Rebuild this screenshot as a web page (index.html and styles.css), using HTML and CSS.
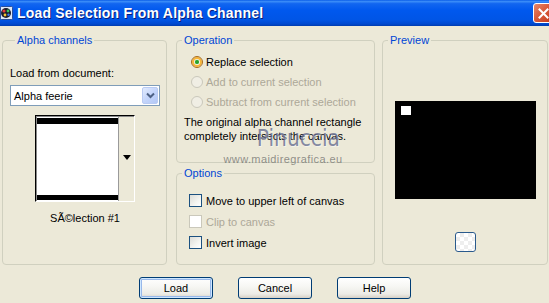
FILE: index.html
```html
<!DOCTYPE html>
<html>
<head>
<meta charset="utf-8">
<link rel="stylesheet" href="styles.css">
</head>
<body>
<div class="window">
  <div class="titlebar">
    <svg class="app-icon" width="13" height="14" viewBox="0 0 13 14">
      <rect x="0.5" y="0.5" width="12" height="13" rx="1" fill="#dfe8f7" stroke="#2b4f9a"/>
      <circle cx="6" cy="7" r="5" fill="#1b1b2a"/>
      <circle cx="4" cy="5" r="1.6" fill="#e23b3b"/>
      <circle cx="8" cy="5" r="1.4" fill="#3cc25a"/>
      <circle cx="5" cy="9" r="1.4" fill="#f2c230"/>
      <circle cx="8.5" cy="8.8" r="1.2" fill="#3a7be8"/>
    </svg>
    <span class="title">Load Selection From Alpha Channel</span>
    <span class="close">
      <svg width="11" height="11" viewBox="0 0 11 11"><path d="M1.5 1.5 L9.5 9.5 M9.5 1.5 L1.5 9.5" stroke="#fff" stroke-width="2" stroke-linecap="square"/></svg>
    </span>
  </div>
  <div class="content">
    <div class="groups">
      <fieldset class="group alpha">
        <legend>Alpha channels</legend>
        <div class="field-label">Load from document:</div>
        <div class="select">
          <span class="select-value">Alpha feerie</span>
          <span class="select-btn">
            <svg width="9" height="7" viewBox="0 0 9 7"><path d="M1 1.5 L4.5 5 L8 1.5" fill="none" stroke="#4d6185" stroke-width="2"/></svg>
          </span>
        </div>
        <div class="thumbbox">
          <div class="thumb"></div>
          <div class="thumb-side"><span class="tri"></span></div>
        </div>
        <div class="caption">SÃ©lection #1</div>
      </fieldset>
      <div class="middle">
        <fieldset class="group operation">
          <legend>Operation</legend>
          <div class="rows">
            <div class="row"><span class="radio checked"></span><span>Replace selection</span></div>
            <div class="row disabled"><span class="radio"></span><span>Add to current selection</span></div>
            <div class="row disabled"><span class="radio"></span><span>Subtract from current selection</span></div>
          </div>
          <p class="desc">The original alpha channel rectangle completely intersects the canvas.</p>
        </fieldset>
        <fieldset class="group options">
          <legend>Options</legend>
          <div class="rows">
            <div class="row crow"><span class="check"></span><span>Move to upper left of canvas</span></div>
            <div class="row crow disabled"><span class="check"></span><span>Clip to canvas</span></div>
            <div class="row crow"><span class="check"></span><span>Invert image</span></div>
          </div>
        </fieldset>
      </div>
      <fieldset class="group preview">
        <legend>Preview</legend>
        <div class="preview-canvas"><span class="preview-sel"></span></div>
        <span class="preview-btn"></span>
      </fieldset>
    </div>
    <div class="buttons">
      <span class="btn default">Load</span>
      <span class="btn">Cancel</span>
      <span class="btn">Help</span>
    </div>
  </div>
  <div class="watermark">
    <span class="wm-name">Pinuccia</span>
    <span class="wm-url">www.maidiregrafica.eu</span>
  </div>
</div>
</body>
</html>
```

FILE: styles.css
```css
* { box-sizing: border-box; }
html, body { margin: 0; padding: 0; }
body {
  font-family: "Liberation Sans", Arial, sans-serif;
  font-size: 11px;
  color: #000;
  background: #ECE9D8;
}
.window {
  position: relative;
  width: 549px;
  height: 303px;
  overflow: hidden;
  background: #ECE9D8;
}
.titlebar {
  height: 26px;
  display: flex;
  align-items: center;
  background: linear-gradient(#0A5DE8 0%, #3A8CF8 6%, #1266F0 14%, #0058EE 40%, #0055E6 75%, #0049CF 92%, #003BAE 100%);
}
.app-icon { margin-left: 0; margin-right: 4px; flex: none; }
.title {
  color: #fff;
  font-weight: bold;
  font-size: 14px;
  letter-spacing: 0.2px;
  text-shadow: 1px 1px 0 #0A1E7A;
  flex: 1;
}
.close {
  width: 21px;
  height: 20px;
  margin-right: -5px;
  border: 1px solid #fff;
  border-radius: 3px;
  background: linear-gradient(135deg, #E6876B 0%, #D85B3B 45%, #C4381A 100%);
  display: flex;
  align-items: center;
  justify-content: center;
  flex: none;
}
.content {
  padding: 7px 1px 0 2px;
}
.groups {
  display: flex;
  align-items: flex-start;
}
.group {
  margin: 0;
  padding: 0;
  min-width: 0;
  border: 1px solid #D0D0BF;
  border-radius: 4px;
}
.group legend {
  padding: 0 2px;
  margin-left: 5px;
  color: #0046D5;
  line-height: 14px;
  font-size: 11px;
}
.alpha {
  width: 165px;
  height: 232px;
  padding-left: 7px;
  padding-right: 6px;
}
.middle {
  width: 199px;
  margin-left: 9px;
  display: flex;
  flex-direction: column;
  gap: 3px;
}
.operation { height: 130px; }
.options { height: 99px; }
.preview {
  width: 166px;
  height: 232px;
  margin-left: 7px;
  display: flex;
  flex-direction: column;
  align-items: center;
}
.field-label {
  margin-top: 20px;
  line-height: 13px;
}
.select {
  margin-top: 5px;
  width: 150px;
  height: 21px;
  border: 1px solid #7F9DB9;
  background: #fff;
  display: flex;
  align-items: center;
  padding: 1px;
}
.select-value { flex: 1; padding-left: 2px; }
.select-btn {
  width: 16px;
  height: 17px;
  border: 1px solid #B9CBF3;
  border-radius: 2px;
  background: linear-gradient(135deg, #E2EBFE 0%, #C4D5FB 50%, #B3C8F6 100%);
  display: flex;
  align-items: center;
  justify-content: center;
}
.thumbbox {
  margin: 9px auto 0;
  width: 100px;
  height: 87px;
  border: 1px solid #000;
  border-right-color: #fff;
  border-bottom-color: #fff;
  box-shadow: inset 1px 1px 0 #8a8a8a;
  display: flex;
  background: #fff;
}
.thumb {
  flex: 1;
  margin: 2px 0 1px 1px;
  background: #fff;
  border-top: 6px solid #000;
  border-bottom: 5px solid #000;
}
.thumb-side {
  width: 16px;
  margin: 1px 0 0 0;
  background: #ECE9D8;
  border-left: 1px solid #9a9a9a;
  display: flex;
  align-items: flex-start;
  justify-content: center;
  padding-top: 38px;
}
.tri {
  width: 0;
  height: 0;
  border-left: 4px solid transparent;
  border-right: 4px solid transparent;
  border-top: 5px solid #000;
}
.caption {
  margin-top: 9px;
  text-align: center;
  line-height: 14px;
}
.rows {
  display: flex;
  flex-direction: column;
  margin-top: 5px;
  padding-left: 14px;
}
.row {
  height: 20px;
  display: flex;
  align-items: center;
  gap: 3px;
}
.row.disabled { color: #ACA899; }
.radio {
  width: 12px;
  height: 12px;
  border-radius: 50%;
  border: 1px solid #1C5180;
  background: radial-gradient(circle at 65% 65%, #fff 0%, #e6e6e0 100%);
  position: relative;
  flex: none;
}
.radio.checked {
  border-color: #A76A1B;
  box-shadow: inset 0 0 0 2px #F8B637;
}
.radio.checked::after {
  content: "";
  position: absolute;
  left: 3px;
  top: 3px;
  width: 4px;
  height: 4px;
  border-radius: 50%;
  background: #2BA22B;
  box-shadow: 0 0 1px #5ccc5c;
}
.row.disabled .radio {
  border-color: #CAC8BB;
  background: #F0EEE4;
}
.desc {
  margin: 3px 0 0;
  padding-left: 7px;
  padding-right: 6px;
  line-height: 14px;
}
.options .rows {
  margin-top: 10px;
  padding-left: 12px;
}
.crow { height: 21px; gap: 4px; }
.check {
  width: 13px;
  height: 13px;
  border: 1px solid #1C5180;
  background: linear-gradient(135deg, #DCDCD7 0%, #F4F4F0 60%, #fff 100%);
  flex: none;
}
.crow.disabled .check {
  border-color: #CAC8BB;
  background: #fff;
}
.preview-canvas {
  margin-top: 54px;
  width: 141px;
  height: 98px;
  background: #000;
  padding: 5px 0 0 6px;
}
.preview-sel {
  display: block;
  width: 10px;
  height: 9px;
  background: #fff;
}
.preview-btn {
  margin-top: 33px;
  width: 21px;
  height: 20px;
  border: 1px solid #2A5A8C;
  border-radius: 3px;
  background-color: #fff;
  background-image: conic-gradient(#EEEEEE 25%, #fff 25% 50%, #EEEEEE 50% 75%, #fff 75%);
  background-size: 8px 8px;
}
.buttons {
  margin-top: 12px;
  display: flex;
  justify-content: center;
  gap: 25px;
}
.btn {
  width: 74px;
  height: 22px;
  border: 1px solid #003C74;
  border-radius: 3px;
  background: linear-gradient(#FFFFFF 0%, #F7F7F4 40%, #ECEBE6 80%, #D6D0C5 100%);
  display: flex;
  align-items: center;
  justify-content: center;
  font-size: 11px;
}
.btn.default {
  box-shadow: inset 0 0 0 1px #CEE7FF, inset 0 0 0 2px #98B8EA;
}
.watermark {
  position: absolute;
  left: 222px;
  top: 127px;
  width: 122px;
  display: flex;
  flex-direction: column;
  align-items: center;
  pointer-events: none;
}
.wm-name {
  font-family: "DejaVu Sans", sans-serif;
  font-size: 23px;
  line-height: 23px;
  color: rgba(88, 96, 135, 0.72);
  text-shadow: 1px 1px 0 rgba(255,255,255,0.5);
  margin-left: 30px;
  transform: scaleX(0.88);
}
.wm-url {
  font-size: 11px;
  line-height: 12px;
  color: rgba(90, 90, 90, 0.65);
  letter-spacing: 0.4px;
  margin-top: 3px;
}
```
